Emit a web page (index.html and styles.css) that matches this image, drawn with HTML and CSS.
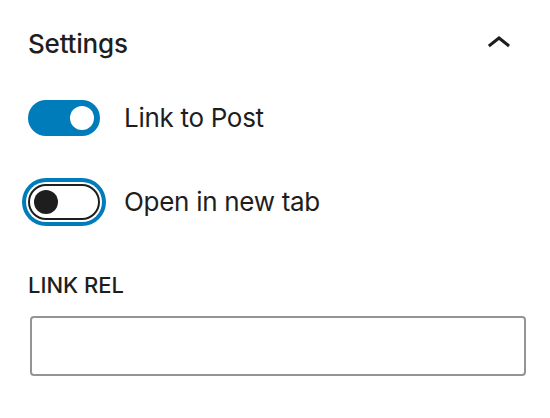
FILE: index.html
```html
<!DOCTYPE html>
<html>

<head>
    <meta charset="UTF-8">
    <title>Settings</title>
    <link rel="stylesheet" href="styles.css">
</head>

<body>
    <div class="panel">
        <div class="panel-header">
            <h2 class="panel-title">Settings</h2>
            <svg class="chevron" width="48" height="48" viewBox="0 0 24 24" aria-hidden="true">
                <path d="M6.5 12.4L12 8l5.5 4.4-.9 1.2L12 10l-4.6 3.6-1-1.2z"></path>
            </svg>
        </div>

        <div class="toggle-row first">
            <span class="toggle on"><span class="knob"></span></span>
            <label class="toggle-label">Link to Post</label>
        </div>

        <div class="toggle-row">
            <span class="toggle off focused"><span class="knob"></span></span>
            <label class="toggle-label">Open in new tab</label>
        </div>

        <label class="field-label" for="link-rel">LINK REL</label>
        <input type="text" id="link-rel" class="text-input">
    </div>
</body>

</html>
```

FILE: styles.css
```css
body {
    margin: 0;
    background: #fff;
    color: #1e1e1e;
    font-family: Inter, "Noto Sans", sans-serif;
}

.panel {
    padding: 20px 24px 0 28px;
    display: flex;
    flex-direction: column;
}

.panel-header {
    display: flex;
    justify-content: space-between;
    align-items: center;
    height: 48px;
}

.panel-title {
    margin: 0;
    font-size: 26px;
    font-weight: 500;
    line-height: 48px;
    letter-spacing: -0.2px;
}

.chevron {
    fill: #1e1e1e;
    margin-right: 3px;
}

.toggle-row {
    display: flex;
    align-items: center;
    height: 36px;
    margin-top: 48px;
}

.toggle-row.first {
    margin-top: 32px;
}

.toggle {
    box-sizing: border-box;
    display: flex;
    align-items: center;
    width: 72px;
    height: 36px;
    border-radius: 18px;
    padding: 0 6px;
    margin-right: 24px;
}

.toggle.on {
    background: #007cba;
    justify-content: flex-end;
}

.toggle.on .knob {
    background: #fff;
}

.toggle.off {
    background: #fff;
    border: 2px solid #1e1e1e;
    padding: 0 4px;
}

.toggle.off .knob {
    background: #1e1e1e;
}

.toggle.focused {
    box-shadow: 0 0 0 2px #fff, 0 0 0 6px #007cba;
}

.knob {
    width: 24px;
    height: 24px;
    border-radius: 50%;
}

.toggle-label {
    font-size: 26px;
    line-height: 36px;
    letter-spacing: -0.3px;
}

.field-label {
    margin-top: 49px;
    font-size: 22px;
    font-weight: 500;
    line-height: 32px;
    margin-bottom: 15px;
}

.text-input {
    box-sizing: border-box;
    width: 496px;
    height: 60px;
    margin: 0 0 0 2px;
    border: 2px solid #949494;
    border-radius: 4px;
    background: #fff;
}
```
